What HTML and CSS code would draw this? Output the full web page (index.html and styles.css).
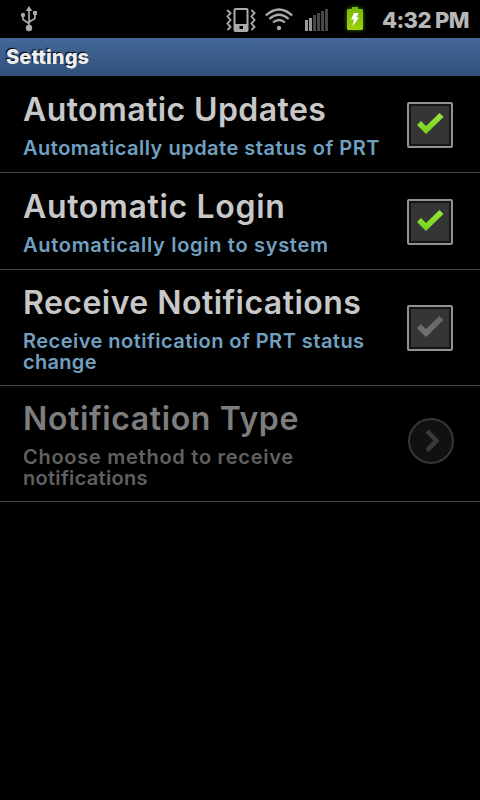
FILE: index.html
```html
<!DOCTYPE html>
<html lang="en">
<head>
<meta charset="utf-8">
<title>Settings</title>
<link rel="stylesheet" href="styles.css">
</head>
<body>
<header class="status">
  <svg class="usb" width="18" height="26" viewBox="0 0 18 26" fill="none" stroke="#aaa" stroke-width="1.7"><path d="M9 4v18M9 17.500L3 13.500V9M9 16l6-3.500V8"/><path d="M9 0l3.300 5H5.700z" fill="#aaa" stroke="none"/><circle cx="9" cy="22" r="3.200" fill="#aaa" stroke="none"/><circle cx="3" cy="9" r="2.200" fill="#aaa" stroke="none"/><path d="M13 5h4v4h-4z" fill="#aaa" stroke="none"/></svg>
  <svg class="vibrate" width="30" height="24" viewBox="0 0 30 24" fill="none" stroke="#aaa"><path d="M9.500 1h11q1 0 1 1v20q0 1-1 1h-11q-1 0-1-1V2q0-1 1-1z" stroke-width="2"/><path d="M8 16h14v7H8z" fill="#aaa" stroke="none"/><path d="M13.500 18h3.500v3h-3.500z" fill="#000" stroke="none"/><path d="M1 2l3.500 3L1.500 8.500 4.500 12l-3 3.500 3 3.500-3 3M25.500 2l3 3-3 3.500 3 3.500-3 3.500 3 3.500-3 3" stroke-width="1.900"/></svg>
  <svg class="wifi" width="28" height="24" viewBox="0 0 28 24" fill="none" stroke="#aaa" stroke-width="2.200"><path d="M.8 7.500Q14-4.500 27.200 7.500M4.300 11Q14 2.500 23.700 11M8 14.500q6-5 12 0"/><circle cx="14" cy="20" r="2.200" fill="#aaa" stroke="none"/></svg>
  <svg class="signal" width="24" height="22" viewBox="0 0 24 22" fill="#484848"><path d="M0 11h3v11H0zM4 9h3v13H4z" fill="#999"/><path d="M8 6h3v16H8zM12 4h3v18h-3zM16 2h3v20h-3zM20 0h3v22h-3z"/></svg>
  <svg class="battery" width="16" height="23" viewBox="0 0 16 23"><defs><linearGradient id="bat" x2="0" y2="1"><stop stop-color="#78b508"/><stop offset="1" stop-color="#9bd20c"/></linearGradient></defs><path d="M5 0h6v2h4l1 1v19l-1 1H1l-1-1V3l1-1h4z" fill="url(#bat)"/><path d="M7 6h4.500L9.500 10.500H12L5.500 19.500 7 12.500H4z" fill="#fff"/></svg>
  <span class="clock">4:32 PM</span>
</header>
<h1 class="titlebar">Settings</h1>
<svg class="defs" width="0" height="0"><defs><linearGradient id="on" x2="0" y2="1"><stop stop-color="#9ae63d"/><stop offset="1" stop-color="#75d01b"/></linearGradient><linearGradient id="off" x2="0" y2="1"><stop stop-color="#626262"/><stop offset="1" stop-color="#737373"/></linearGradient></defs></svg>
<main>
  <section class="row">
    <div class="copy"><h2 class="t-updates">Automatic Updates</h2><p class="s-updates">Automatically update status of PRT</p></div>
    <div class="box"><svg width="38" height="38" viewBox="0 0 38 38"><path d="M6 19l4-4 5 5L28.500 7l4 4L15 28z" fill="url(#on)"/></svg></div>
  </section>
  <section class="row">
    <div class="copy"><h2 class="t-login">Automatic Login</h2><p class="s-login">Automatically login to system</p></div>
    <div class="box"><svg width="38" height="38" viewBox="0 0 38 38"><path d="M6 19l4-4 5 5L28.500 7l4 4L15 28z" fill="url(#on)"/></svg></div>
  </section>
  <section class="row tall">
    <div class="copy"><h2 class="t-receive">Receive Notifications</h2><p class="s-receive">Receive notification of PRT status<br><span class="last">change</span></p></div>
    <div class="box"><svg width="38" height="38" viewBox="0 0 38 38"><path d="M6 19l4-4 5 5L28.500 7l4 4L15 28z" fill="url(#off)"/></svg></div>
  </section>
  <section class="row tall disabled">
    <div class="copy"><h2 class="t-type">Notification Type</h2><p class="s-type">Choose method to receive<br><span class="last">notifications</span></p></div>
    <svg class="more" width="46" height="46" viewBox="0 0 46 46"><circle cx="23" cy="23" r="22" fill="#111" stroke="#363636" stroke-width="2"/><path d="M19 13l9.500 9.700L19 32.500" fill="none" stroke="#393939" stroke-width="4.600"/></svg>
  </section>
</main>
</body>
</html>
```
FILE: styles.css
```css
* { box-sizing: border-box; }
body { margin: 0; background: #000; color: #c8c8c8; font-family: Inter, "Liberation Sans", sans-serif; }
h1, h2, p { margin: 0; }
svg { display: block; flex: none; }
.status { height: 38px; display: flex; align-items: flex-start; padding-left: 20px; }
.usb { margin-top: 6px; }
.vibrate { margin: 8px 0 0 188px; }
.wifi { margin: 8px 0 0 9px; }
.signal { margin: 9px 0 0 12px; }
.battery { margin: 7px 0 0 18px; filter: drop-shadow(0 0 2px #4c7c00); }
.clock { margin: 7px 0 0 19px; font-size: 22px; line-height: 26px; font-weight: 800; color: #b7b7b7; white-space: nowrap; letter-spacing: -0.65px; }
.titlebar { height: 38px; padding-left: 6px; background: linear-gradient(#45699a, #304f79); color: #eee; font-size: 20px; line-height: 38px; font-weight: 800; text-shadow: -1px -1px 1px #000; letter-spacing: 0.1px; }
.defs { position: absolute; }
.row { height: 97px; display: flex; align-items: center; justify-content: space-between; padding: 2px 27px 0 23px; border-bottom: 1px solid #454545; }
.tall { height: 116px; padding-top: 0; }
.copy { align-self: flex-start; padding-top: 12px; white-space: nowrap; }
.tall .copy { padding-top: 13px; }
h2 { font-size: 32px; line-height: 40px; font-weight: 600; }
p { margin-top: 8px; font-size: 20px; line-height: 21px; font-weight: 600; color: #71a0c1; }
.t-updates { letter-spacing: 0.41px; }
.t-login { letter-spacing: 0.67px; }
.t-receive { letter-spacing: 0.46px; }
.t-type { letter-spacing: 0.62px; }
.s-updates { letter-spacing: 0.5px; }
.s-login { letter-spacing: 0.7px; }
.s-receive { letter-spacing: 0.47px; }
.s-type { letter-spacing: 0.73px; }
.last { letter-spacing: 0.3px; }
.box { width: 46px; height: 46px; flex: none; border: 2px solid #929292; border-radius: 2px; background: #353535; box-shadow: inset 0 0 0 2px #151515; padding: 2px; }
.more { margin: -5px -1px 0 0; }
.disabled h2 { color: #7d7d7d; }
.disabled p { color: #606060; }
```
